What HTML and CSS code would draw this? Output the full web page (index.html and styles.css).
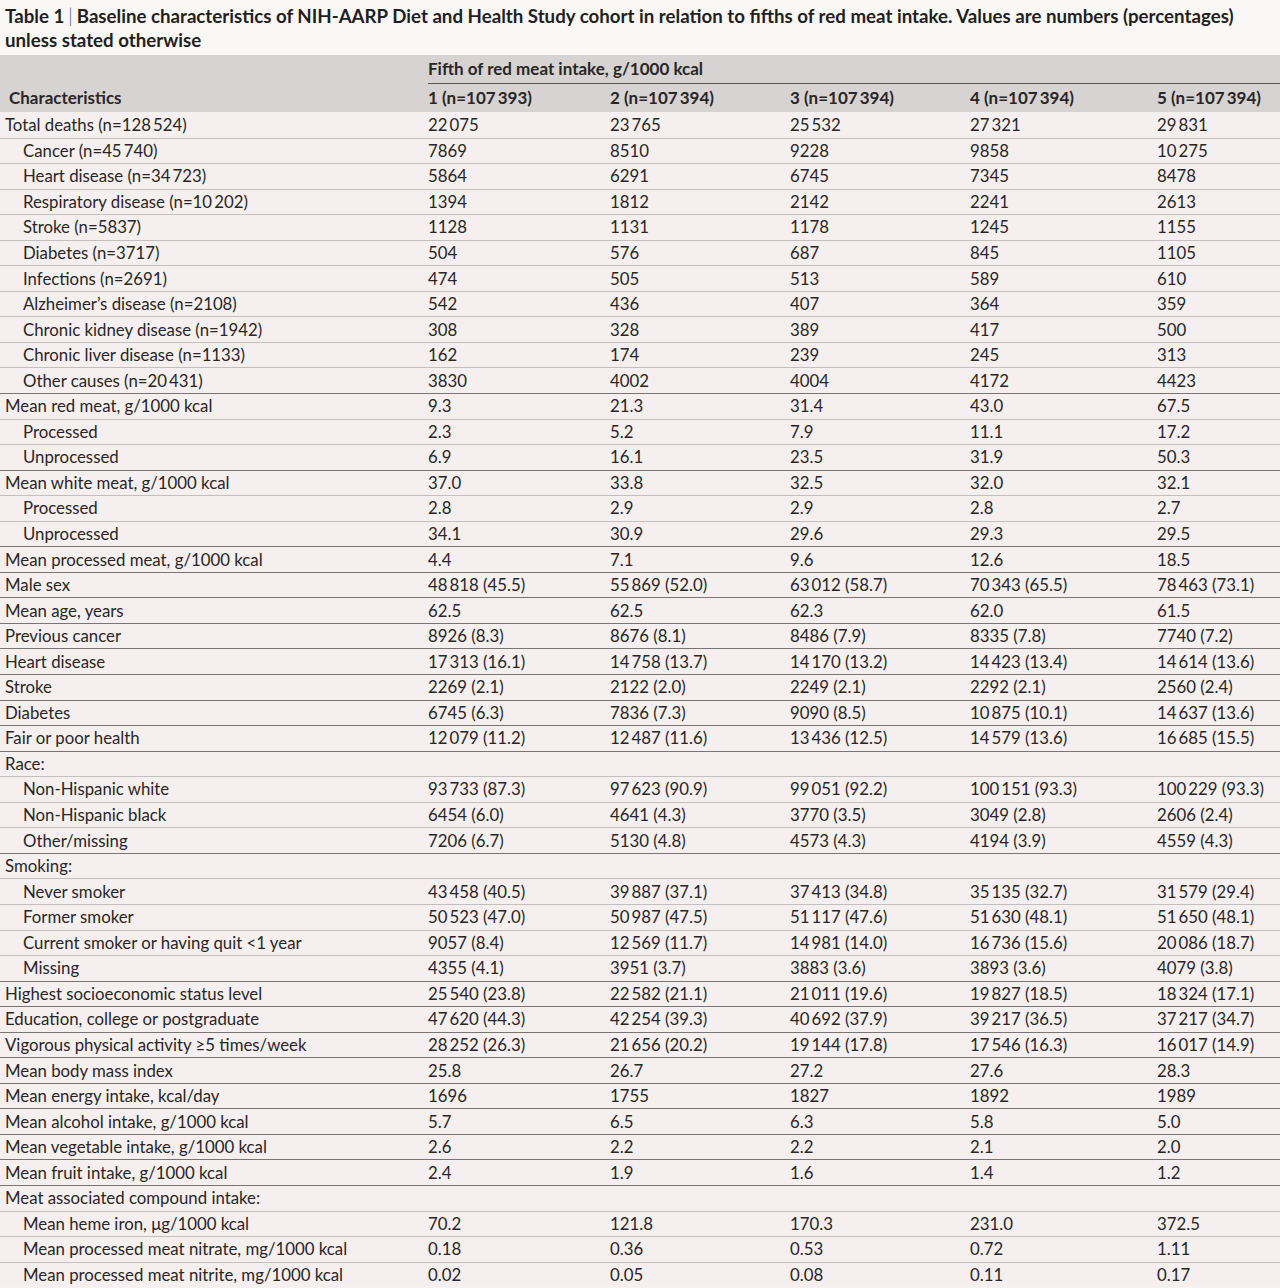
FILE: index.html
```html
<!DOCTYPE html>
<html>
<head>
<meta charset="utf-8">
<link rel="stylesheet" href="styles.css">
</head>
<body>
<div class="page">
  <div class="caption"><b>Table 1</b><span class="bar">|</span><b>Baseline characteristics of NIH-AARP Diet and Health Study cohort in relation to fifths of red meat intake. Values are numbers (percentages) unless stated otherwise</b></div>
  <table class="data">
    <colgroup>
      <col class="c0"><col class="c1"><col class="c2"><col class="c3"><col class="c4"><col class="c5">
    </colgroup>
    <thead>
      <tr class="h1"><th></th><th colspan="5" class="span">Fifth of red meat intake, g/1000 kcal</th></tr>
      <tr class="h2"><th>Characteristics</th><th>1 (n=107&#8201;393)</th><th>2 (n=107&#8201;394)</th><th>3 (n=107&#8201;394)</th><th>4 (n=107&#8201;394)</th><th>5 (n=107&#8201;394)</th></tr>
    </thead>
    <tbody>
      <tr class="top first"><td>Total deaths (n=128&#8201;524)</td><td>22&#8201;075</td><td>23&#8201;765</td><td>25&#8201;532</td><td>27&#8201;321</td><td>29&#8201;831</td></tr>
      <tr class="sub"><td>Cancer (n=45&#8201;740)</td><td>7869</td><td>8510</td><td>9228</td><td>9858</td><td>10&#8201;275</td></tr>
      <tr class="sub"><td>Heart disease (n=34&#8201;723)</td><td>5864</td><td>6291</td><td>6745</td><td>7345</td><td>8478</td></tr>
      <tr class="sub"><td>Respiratory disease (n=10&#8201;202)</td><td>1394</td><td>1812</td><td>2142</td><td>2241</td><td>2613</td></tr>
      <tr class="sub"><td>Stroke (n=5837)</td><td>1128</td><td>1131</td><td>1178</td><td>1245</td><td>1155</td></tr>
      <tr class="sub"><td>Diabetes (n=3717)</td><td>504</td><td>576</td><td>687</td><td>845</td><td>1105</td></tr>
      <tr class="sub"><td>Infections (n=2691)</td><td>474</td><td>505</td><td>513</td><td>589</td><td>610</td></tr>
      <tr class="sub"><td>Alzheimer’s disease (n=2108)</td><td>542</td><td>436</td><td>407</td><td>364</td><td>359</td></tr>
      <tr class="sub"><td>Chronic kidney disease (n=1942)</td><td>308</td><td>328</td><td>389</td><td>417</td><td>500</td></tr>
      <tr class="sub"><td>Chronic liver disease (n=1133)</td><td>162</td><td>174</td><td>239</td><td>245</td><td>313</td></tr>
      <tr class="sub"><td>Other causes (n=20&#8201;431)</td><td>3830</td><td>4002</td><td>4004</td><td>4172</td><td>4423</td></tr>
      <tr class="top"><td>Mean red meat, g/1000 kcal</td><td>9.3</td><td>21.3</td><td>31.4</td><td>43.0</td><td>67.5</td></tr>
      <tr class="sub"><td>Processed</td><td>2.3</td><td>5.2</td><td>7.9</td><td>11.1</td><td>17.2</td></tr>
      <tr class="sub"><td>Unprocessed</td><td>6.9</td><td>16.1</td><td>23.5</td><td>31.9</td><td>50.3</td></tr>
      <tr class="top"><td>Mean white meat, g/1000 kcal</td><td>37.0</td><td>33.8</td><td>32.5</td><td>32.0</td><td>32.1</td></tr>
      <tr class="sub"><td>Processed</td><td>2.8</td><td>2.9</td><td>2.9</td><td>2.8</td><td>2.7</td></tr>
      <tr class="sub"><td>Unprocessed</td><td>34.1</td><td>30.9</td><td>29.6</td><td>29.3</td><td>29.5</td></tr>
      <tr class="top"><td>Mean processed meat, g/1000 kcal</td><td>4.4</td><td>7.1</td><td>9.6</td><td>12.6</td><td>18.5</td></tr>
      <tr class="top"><td>Male sex</td><td>48&#8201;818 (45.5)</td><td>55&#8201;869 (52.0)</td><td>63&#8201;012 (58.7)</td><td>70&#8201;343 (65.5)</td><td>78&#8201;463 (73.1)</td></tr>
      <tr class="top"><td>Mean age, years</td><td>62.5</td><td>62.5</td><td>62.3</td><td>62.0</td><td>61.5</td></tr>
      <tr class="top"><td>Previous cancer</td><td>8926 (8.3)</td><td>8676 (8.1)</td><td>8486 (7.9)</td><td>8335 (7.8)</td><td>7740 (7.2)</td></tr>
      <tr class="top"><td>Heart disease</td><td>17&#8201;313 (16.1)</td><td>14&#8201;758 (13.7)</td><td>14&#8201;170 (13.2)</td><td>14&#8201;423 (13.4)</td><td>14&#8201;614 (13.6)</td></tr>
      <tr class="top"><td>Stroke</td><td>2269 (2.1)</td><td>2122 (2.0)</td><td>2249 (2.1)</td><td>2292 (2.1)</td><td>2560 (2.4)</td></tr>
      <tr class="top"><td>Diabetes</td><td>6745 (6.3)</td><td>7836 (7.3)</td><td>9090 (8.5)</td><td>10&#8201;875 (10.1)</td><td>14&#8201;637 (13.6)</td></tr>
      <tr class="top"><td>Fair or poor health</td><td>12&#8201;079 (11.2)</td><td>12&#8201;487 (11.6)</td><td>13&#8201;436 (12.5)</td><td>14&#8201;579 (13.6)</td><td>16&#8201;685 (15.5)</td></tr>
      <tr class="top"><td>Race:</td><td></td><td></td><td></td><td></td><td></td></tr>
      <tr class="sub"><td>Non-Hispanic white</td><td>93&#8201;733 (87.3)</td><td>97&#8201;623 (90.9)</td><td>99&#8201;051 (92.2)</td><td>100&#8201;151 (93.3)</td><td>100&#8201;229 (93.3)</td></tr>
      <tr class="sub"><td>Non-Hispanic black</td><td>6454 (6.0)</td><td>4641 (4.3)</td><td>3770 (3.5)</td><td>3049 (2.8)</td><td>2606 (2.4)</td></tr>
      <tr class="sub"><td>Other/missing</td><td>7206 (6.7)</td><td>5130 (4.8)</td><td>4573 (4.3)</td><td>4194 (3.9)</td><td>4559 (4.3)</td></tr>
      <tr class="top"><td>Smoking:</td><td></td><td></td><td></td><td></td><td></td></tr>
      <tr class="sub"><td>Never smoker</td><td>43&#8201;458 (40.5)</td><td>39&#8201;887 (37.1)</td><td>37&#8201;413 (34.8)</td><td>35&#8201;135 (32.7)</td><td>31&#8201;579 (29.4)</td></tr>
      <tr class="sub"><td>Former smoker</td><td>50&#8201;523 (47.0)</td><td>50&#8201;987 (47.5)</td><td>51&#8201;117 (47.6)</td><td>51&#8201;630 (48.1)</td><td>51&#8201;650 (48.1)</td></tr>
      <tr class="sub"><td>Current smoker or having quit &lt;1 year</td><td>9057 (8.4)</td><td>12&#8201;569 (11.7)</td><td>14&#8201;981 (14.0)</td><td>16&#8201;736 (15.6)</td><td>20&#8201;086 (18.7)</td></tr>
      <tr class="sub"><td>Missing</td><td>4355 (4.1)</td><td>3951 (3.7)</td><td>3883 (3.6)</td><td>3893 (3.6)</td><td>4079 (3.8)</td></tr>
      <tr class="top"><td>Highest socioeconomic status level</td><td>25&#8201;540 (23.8)</td><td>22&#8201;582 (21.1)</td><td>21&#8201;011 (19.6)</td><td>19&#8201;827 (18.5)</td><td>18&#8201;324 (17.1)</td></tr>
      <tr class="top"><td>Education, college or postgraduate</td><td>47&#8201;620 (44.3)</td><td>42&#8201;254 (39.3)</td><td>40&#8201;692 (37.9)</td><td>39&#8201;217 (36.5)</td><td>37&#8201;217 (34.7)</td></tr>
      <tr class="top"><td>Vigorous physical activity ≥5 times/week</td><td>28&#8201;252 (26.3)</td><td>21&#8201;656 (20.2)</td><td>19&#8201;144 (17.8)</td><td>17&#8201;546 (16.3)</td><td>16&#8201;017 (14.9)</td></tr>
      <tr class="top"><td>Mean body mass index</td><td>25.8</td><td>26.7</td><td>27.2</td><td>27.6</td><td>28.3</td></tr>
      <tr class="top"><td>Mean energy intake, kcal/day</td><td>1696</td><td>1755</td><td>1827</td><td>1892</td><td>1989</td></tr>
      <tr class="top"><td>Mean alcohol intake, g/1000 kcal</td><td>5.7</td><td>6.5</td><td>6.3</td><td>5.8</td><td>5.0</td></tr>
      <tr class="top"><td>Mean vegetable intake, g/1000 kcal</td><td>2.6</td><td>2.2</td><td>2.2</td><td>2.1</td><td>2.0</td></tr>
      <tr class="top"><td>Mean fruit intake, g/1000 kcal</td><td>2.4</td><td>1.9</td><td>1.6</td><td>1.4</td><td>1.2</td></tr>
      <tr class="top"><td>Meat associated compound intake:</td><td></td><td></td><td></td><td></td><td></td></tr>
      <tr class="sub"><td>Mean heme iron, μg/1000 kcal</td><td>70.2</td><td>121.8</td><td>170.3</td><td>231.0</td><td>372.5</td></tr>
      <tr class="sub"><td>Mean processed meat nitrate, mg/1000 kcal</td><td>0.18</td><td>0.36</td><td>0.53</td><td>0.72</td><td>1.11</td></tr>
      <tr class="sub"><td>Mean processed meat nitrite, mg/1000 kcal</td><td>0.02</td><td>0.05</td><td>0.08</td><td>0.11</td><td>0.17</td></tr>
    </tbody>
  </table>
</div>
</body>
</html>
```

FILE: styles.css
```css
html, body {
  margin: 0;
  padding: 0;
  background: #f7f2f2;
}
.page {
  width: 1280px;
  height: 1288px;
  overflow: hidden;
  font-family: Lato, "Liberation Sans", sans-serif;
  color: #2a2626;
}
.caption {
  background: #faf7f7;
  height: 55px;
  box-sizing: border-box;
  padding: 4px 5px 0;
  font-size: 18.7px;
  line-height: 24px;
  color: #231f1f;
}
.caption b { font-weight: 700; }
.caption .bar {
  display: inline-block;
  font-weight: 300;
  color: #555;
  margin: 0 4px 0 4px;
}
.data {
  width: 1280px;
  border-collapse: collapse;
  table-layout: fixed;
  font-size: 16.8px;
}
.c0 { width: 428px; }
.c1 { width: 182px; }
.c2 { width: 180px; }
.c3 { width: 180px; }
.c4 { width: 187px; }
.c5 { width: 123px; }
.data thead th {
  background: #d7d3d3;
  text-align: left;
  font-weight: 700;
  font-size: 17px;
  padding: 0;
  height: 28px;
  line-height: 28px;
  white-space: nowrap;
  color: #2a2626;
}
.data thead th:first-child { padding-left: 9px; }
.data .h1 th { height: 27px; }
.data .h1 th.span { border-bottom: 1px solid #5a5555; }
.data td {
  padding: 0;
  height: 24.56px;
  line-height: 20px;
  white-space: nowrap;
  background: #f5efef;
  vertical-align: middle;
}
.data td:first-child { padding-left: 5px; }
.data tr.sub td:first-child { padding-left: 23px; }
.data tr.top td { border-top: 1px solid #7a7474; }
.data tr.sub td { border-top: 1px solid #c4bebe; }
.data tr.first td { border-top: none; height: 25.56px; }
```
